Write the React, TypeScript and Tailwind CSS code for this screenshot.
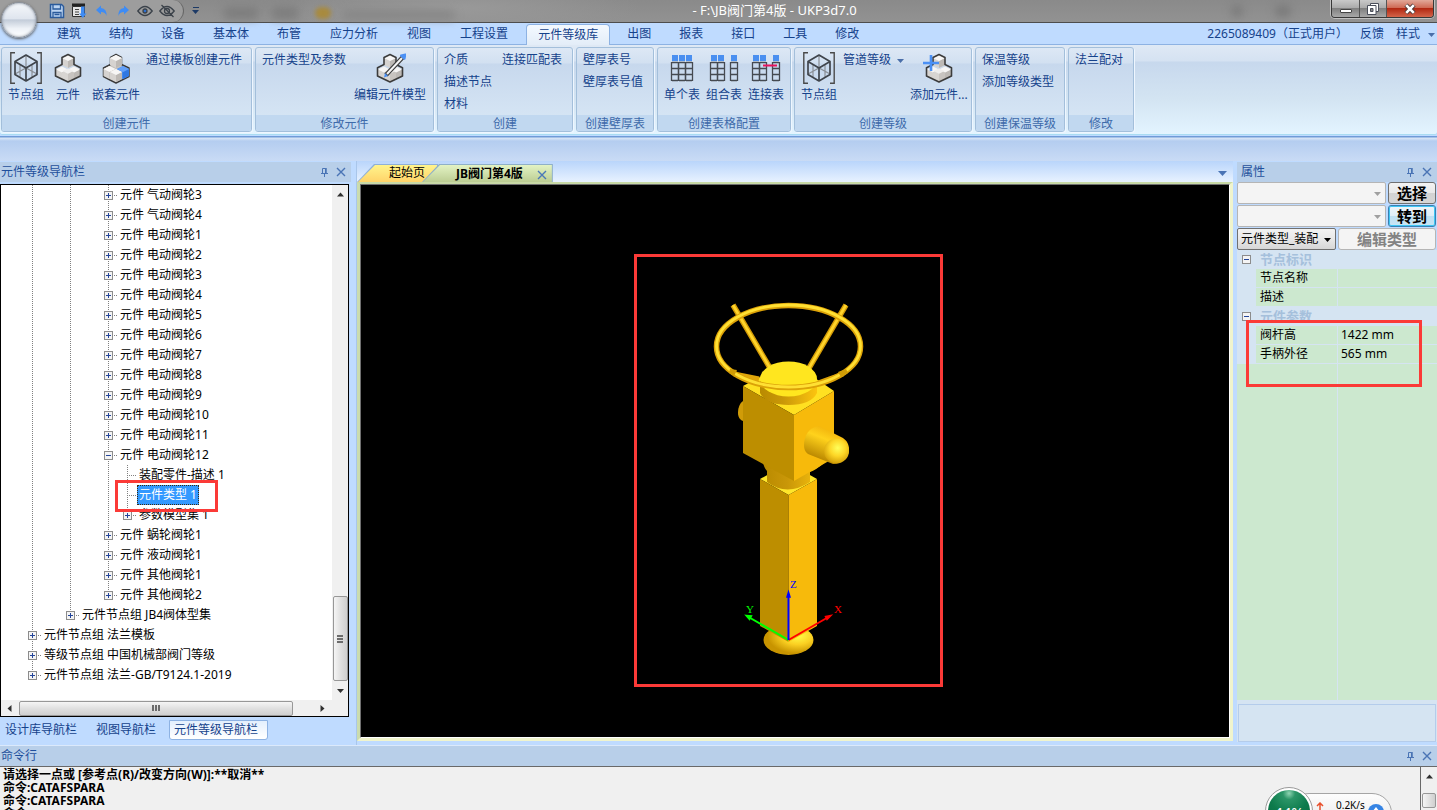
import type { ReactNode } from "react";

/* ---------- small glyphs ---------- */

function Triangle({ dir = "down", className = "" }: { dir?: "down" | "up" | "left" | "right"; className?: string }) {
  const d = {
    down: "M0 2h7L3.5 6z",
    up: "M0 5.500h7L3.500 1.500z",
    left: "M5.500 0v7L1.500 3.500z",
    right: "M1.500 0v7L5.500 3.500z",
  }[dir];
  return (
    <svg viewBox="0 0 7 7" className={`size-[7px] shrink-0 ${className}`} fill="currentColor" aria-hidden="true">
      <path d={d} />
    </svg>
  );
}

function PinIcon() {
  return (
    <svg viewBox="0 0 10 10" className="size-[10px]" fill="none" stroke="currentColor" aria-hidden="true">
      <path d="M2 6.500h7M3.500 6V1.500h3V6M5.500 7v3" />
      <path d="M7 1v5" strokeWidth="1.500" />
    </svg>
  );
}

function CloseIcon() {
  return (
    <svg viewBox="0 0 10 10" className="size-[10px]" fill="none" stroke="currentColor" strokeWidth="1.400" aria-hidden="true">
      <path d="M1 1l8 8M9 1L1 9" />
    </svg>
  );
}

/* ---------- ribbon icons ---------- */

function NodeGroupIcon() {
  return (
    <svg viewBox="0 0 32 32" className="size-8" fill="none" aria-hidden="true">
      <path d="M5 .8H.8v30.400H5M27 .8h4.200v30.400H27" stroke="#4a4a4a" strokeWidth="1.400" />
      <path d="M16 3v13M5 22l11-6 11 6M10 13v12M22 13v12" stroke="#8a8f96" strokeWidth="1.200" />
      <path d="M16 3l11 6.500v13L16 29 5 22.500v-13zM5 9.500L16 16l11-6.500M16 16v13" stroke="#40454c" strokeWidth="1.700" strokeLinejoin="round" />
    </svg>
  );
}

function Cube({ x, y, blue = false }: { x: number; y: number; blue?: boolean }) {
  return (
    <g transform={`translate(${x} ${y})`}>
      <path d="M0-6l6 3v7L0 7l-6-3v-7z" fill={blue ? "#3f87ee" : "#d6d3d0"} />
      <path d="M0 0l6-3v7L0 7z" fill={blue ? "#2f78e2" : "#bdb9b5"} />
      <path d="M0-6l6 3-6 3-6-3z" fill={blue ? "#63a0f8" : "#f7f6f5"} />
    </g>
  );
}

function CubeStack({ children }: { children?: ReactNode }) {
  return (
    <svg viewBox="0 0 32 32" className="size-8" fill="none" aria-hidden="true">
      <Cube x={10} y={20.5} />
      <Cube x={22} y={20.5} />
      <path d="M10 20.500l6-3 6 3v6.500l-6 3-6-3z" fill="#c8c4c0" />
      <path d="M16 17.500v12.500l-6-3v-6.500z" fill="#d8d5d2" />
      <path d="M16 16.500l5.500 2.500-5.500 2.800-5.500-2.800z" fill="#efeeed" />
      <Cube x={16} y={9} />
      <path d="M10 5.500L16 2.500l6 3v7l6.500 3.200v8.300L16 30 3.500 24v-8.300L10 12.500z" stroke="#3c3c3c" strokeWidth="1.600" strokeLinejoin="round" />
      {children}
    </svg>
  );
}

function NestedIcon() {
  return (
    <svg viewBox="0 0 32 32" className="size-8" fill="none" aria-hidden="true">
      <path d="M10.500 5.500L16 2.500l5.500 3v7l7.500 3.500v8.500l-7 3.500-6 3-6-3-6.500-3.500V16l7-3.500z" fill="#c4c0bc" stroke="#3c3c3c" strokeWidth="1.500" strokeLinejoin="round" />
      <Cube x={9.500} y={20} />
      <Cube x={23} y={20} blue />
      <Cube x={16} y={9} />
      <Cube x={16} y={23} />
    </svg>
  );
}

function EditIcon() {
  return (
    <CubeStack>
      <path d="M12 23L29 5" stroke="#3c3c3c" strokeWidth="4.500" />
      <path d="M13 22L28 6" stroke="#f5f5f5" strokeWidth="2" />
      <path d="M27 3.500l3.500 3.300 1-4.300z" fill="#4a90f5" stroke="#4a90f5" strokeWidth="2" strokeLinejoin="round" />
      <path d="M11 21l3 3-4 1.500z" fill="#4a90f5" />
    </CubeStack>
  );
}

function AddIcon() {
  return (
    <CubeStack>
      <path d="M8 3v16M0 11h16" stroke="#4a90f5" strokeWidth="2.600" />
    </CubeStack>
  );
}

function GridColumn({ x }: { x: number }) {
  return (
    <g>
      <rect x={x} y="3" width="6" height="6" fill="#4a8ff0" />
      <path d={`M${x} 10.500h6M${x} 16.500h6M${x} 22.500h6M${x} 28.500h6M${x - 0.5} 10v19M${x + 6.5} 10v19`} stroke="#454a51" strokeWidth="1.300" />
    </g>
  );
}

function TableIcon({ columns, linked = false }: { columns: number[]; linked?: boolean }) {
  return (
    <svg viewBox="0 0 32 32" className="size-8" fill="none" aria-hidden="true">
      {columns.map((x) => (
        <GridColumn key={x} x={x} />
      ))}
      {linked && <path d="M13 13.500h14" stroke="#e8125c" strokeWidth="2.200" />}
    </svg>
  );
}

/* ---------- ribbon ---------- */

function BigButton({ icon, label }: { icon: ReactNode; label: string }) {
  return (
    <button type="button" className="flex flex-col items-center gap-px pt-[3px] whitespace-nowrap">
      {icon}
      <span className="leading-5">{label}</span>
    </button>
  );
}

function TextButtons({ items }: { items: string[] }) {
  return (
    <div className="flex flex-col items-start">
      {items.map((t) => (
        <button type="button" key={t} className="h-[22px] leading-[22px] whitespace-nowrap">
          {t}
        </button>
      ))}
    </div>
  );
}

function Group({ title, width, gap = "gap-1.5", children }: { title: string; width: string; gap?: string; children: ReactNode }) {
  return (
    <section
      className={`${width} flex shrink-0 flex-col overflow-hidden rounded-[3px] border border-[#a3bfdb] bg-[linear-gradient(#dde8f5,#d2e0f1_15px,#c7d8ed_16px,#d9e8f6)] shadow-[1px_1px_0_#eef6ff]`}
    >
      <div className={`flex flex-1 items-start ${gap} pt-px pl-1.5`}>{children}</div>
      <h2 className="h-4 bg-[#c1d8f0] text-center leading-[18px] text-[#3e6aaa]">{title}</h2>
    </section>
  );
}

const tabs = ["建筑", "结构", "设备", "基本体", "布管", "应力分析", "视图", "工程设置", "元件等级库", "出图", "报表", "接口", "工具", "修改"];

function TitleBar() {
  return (
    <header className="relative z-10 flex h-[23px] shrink-0 items-center border-b border-[#4d4d4d] bg-[radial-gradient(ellipse_180px_26px_at_460px_8px,#999,transparent),linear-gradient(#8a8a8a,#929292)] text-white">
      <div className="flex h-full items-center rounded-r-full border-r border-[#666] bg-[#9d9d9d] pr-2 pl-[49px]">
        <div className="flex items-center gap-[6px] text-[#303942]">
          <button type="button" aria-label="保存" className="flex">
            <svg viewBox="0 0 16 16" className="size-4" fill="none" aria-hidden="true">
              <path d="M1.500 1.500h11l2 2v11h-13z" fill="#bcd4f2" stroke="#2b5b9c" strokeWidth="1.500" />
              <path d="M4 1.500v4.500h7.500V1.500M4 14.500V9.500h8v5M5.500 11.500h5" stroke="#2b5b9c" strokeWidth="1.300" />
            </svg>
          </button>
          <button type="button" aria-label="下载" className="flex">
            <svg viewBox="0 0 16 16" className="size-4" fill="none" aria-hidden="true">
              <path d="M1 2h13" stroke="#222" strokeWidth="3" />
              <path d="M1.500 3.500h12v10h-12z" fill="#e4e4e4" stroke="#303030" />
              <path d="M4 6.500h4M4 9h4M4 11.500h4" stroke="#444" />
              <path d="M10 3.500h3.500v7h2L11.800 15 8 10.500h2z" fill="#3f8cf4" />
            </svg>
          </button>
          <button type="button" aria-label="撤销" className="flex">
            <svg viewBox="0 0 16 16" className="size-4" aria-hidden="true">
              <path d="M3 7l5-4.500V5q6 .5 5.500 8Q12.500 9 8 9v2.500z" fill="#3f8cf4" />
            </svg>
          </button>
          <button type="button" aria-label="重做" className="flex">
            <svg viewBox="0 0 16 16" className="size-4" aria-hidden="true">
              <path d="M14 7L9 2.500V5q-6 .5-5.500 8Q4.500 9 9 9v2.500z" fill="#3f8cf4" />
            </svg>
          </button>
          <button type="button" aria-label="显示" className="flex">
            <svg viewBox="0 0 16 16" className="size-4" fill="none" stroke="#3b424a" strokeWidth="1.300" aria-hidden="true">
              <path d="M.8 8Q8-1 15.200 8 8 17 .8 8z" />
              <circle cx="8" cy="8" r="2" fill="#2c6fd0" />
            </svg>
          </button>
          <button type="button" aria-label="隐藏" className="flex">
            <svg viewBox="0 0 16 16" className="size-4" fill="none" stroke="#3b424a" strokeWidth="1.300" aria-hidden="true">
              <path d="M.8 8Q8-1 15.200 8 8 17 .8 8zM2.500 2l12 12" />
              <circle cx="8" cy="8" r="2.500" />
            </svg>
          </button>
        </div>
      </div>
      <button type="button" aria-label="自定义快速访问" className="ml-2 flex flex-col items-center text-[#1d3a66]">
        <span className="h-px w-[6px] bg-current" />
        <Triangle />
      </button>
      <i className="mt-1 ml-6 h-3 w-9 rounded-full bg-[#7d7d7d] blur-[4px]" />
      <i className="mt-1 ml-3 h-3 w-7 rounded-full bg-[#7d7d7d] blur-[4px]" />
      <i className="mt-1 ml-4 h-3 w-4 rounded-full bg-[#a88a3e] blur-[2px]" />
      <i className="mt-2 ml-3 h-2 w-28 rounded-full bg-[#858585] blur-[4px]" />
      <h1 className="absolute inset-x-0 top-0 ml-28 text-center text-[13px] leading-[21px]">- F:\JB阀门第4版 - UKP3d7.0</h1>
      <i className="mr-8 ml-auto h-3 w-3 rounded-full bg-[#7a7a7a] blur-[4px]" />
      <i className="mr-10 h-3 w-4 rounded-full bg-[#7a7a7a] blur-[4px]" />
      <div className="relative mr-[3px] flex h-[18px] self-start overflow-hidden rounded-b-[4px] border border-t-0 border-[#383838] shadow-[0_0_0_1px_#c0c0c0]">
        <button type="button" aria-label="最小化" className="flex w-7 items-center justify-center border-r border-[#555] bg-[linear-gradient(#c9c9c9,#ababab_45%,#808080_50%,#a8a8a8)]">
          <span className="mt-1 h-1 w-3 rounded-[1px] border border-[#444] bg-white" />
        </button>
        <button type="button" aria-label="还原" className="flex w-[27px] items-center justify-center border-r border-[#555] bg-[linear-gradient(#c9c9c9,#ababab_45%,#808080_50%,#a8a8a8)]">
          <svg viewBox="0 0 12 12" className="size-3" fill="#fff" stroke="#4a4e5a" aria-hidden="true">
            <path d="M3.500.5h8v8h-8z" />
            <path d="M.5 2.500h8.500v9H.5z" />
            <path d="M3.500 5.500h2.500v3H3.500z" fill="#888" />
          </svg>
        </button>
        <button type="button" aria-label="关闭" className="flex w-[46px] items-center justify-center bg-[linear-gradient(#e2a899,#cf6a55_45%,#b22812_50%,#d4644a)]">
          <svg viewBox="0 0 12 12" className="size-3" fill="none" aria-hidden="true">
            <path d="M2 2l8 8M10 2l-8 8" stroke="#4b3a3a" strokeWidth="4.500" />
            <path d="M2.200 2.200l7.600 7.600M9.800 2.200L2.200 9.800" stroke="#fff" strokeWidth="2.600" />
          </svg>
        </button>
      </div>
      <button
        type="button"
        aria-label="应用程序菜单"
        className="absolute top-0.5 left-px size-9 rounded-full border border-[#8b929c] bg-[linear-gradient(#f6f8fb_0,#dfe5ee_46%,#c3ccd9_50%,#eef2f7_75%,#fff)] shadow-[0_1px_3px_#555,inset_0_0_3px_#7d8796]"
      />
    </header>
  );
}

function RibbonTabs() {
  return (
    <nav className="flex h-[22px] shrink-0 items-end border-b border-[#8db2e3] bg-[#bfdbff] pl-[43px]">
      {tabs.map((t) =>
        t === "元件等级库" ? (
          <button
            type="button"
            key={t}
            className="mx-[3px] -mb-px h-[21px] rounded-t-[4px] border border-b-0 border-[#8db2e3] bg-[linear-gradient(#f4f9ff,#e3edf8)] px-[11px] leading-5"
          >
            {t}
          </button>
        ) : (
          <button type="button" key={t} className={`h-[21px] pt-px leading-5 ${t.length > 3 ? "px-[15px]" : "px-[14px]"}`}>
            {t}
          </button>
        ),
      )}
      <div className="ml-auto flex items-center gap-3 pr-0.5 leading-5">
        <span>2265089409（正式用户）</span>
        <button type="button">反馈</button>
        <button type="button" className="flex items-center gap-2">
          样式
          <Triangle className="text-[#4a6ea9]" />
        </button>
      </div>
    </nav>
  );
}

function Ribbon() {
  return (
    <div className="flex h-[90px] shrink-0 gap-[3px] overflow-hidden rounded-b-[3px] border-b border-[#a9dcf2] bg-[linear-gradient(#dfe9f5,#d5e2f2_16px,#c7d8ed_17px,#d3e4f2_60%,#e3f4ff)] pt-0.5 pb-0.5 pl-px">
      <Group title="创建元件" width="w-[251px]">
        <div className="flex gap-2">
          <BigButton icon={<NodeGroupIcon />} label="节点组" />
          <BigButton icon={<CubeStack />} label="元件" />
          <BigButton icon={<NestedIcon />} label="嵌套元件" />
        </div>
        <TextButtons items={["通过模板创建元件"]} />
      </Group>
      <Group title="修改元件" width="w-[179px]" gap="gap-2">
        <TextButtons items={["元件类型及参数"]} />
        <BigButton icon={<EditIcon />} label="编辑元件模型" />
      </Group>
      <Group title="创建" width="w-[136px]" gap="gap-2.5">
        <TextButtons items={["介质", "描述节点", "材料"]} />
        <TextButtons items={["连接匹配表"]} />
      </Group>
      <Group title="创建壁厚表" width="w-[78px]">
        <TextButtons items={["壁厚表号", "壁厚表号值"]} />
      </Group>
      <Group title="创建表格配置" width="w-[134px]">
        <BigButton icon={<TableIcon columns={[6, 13, 20]} />} label="单个表" />
        <BigButton icon={<TableIcon columns={[3, 10, 23]} />} label="组合表" />
        <BigButton icon={<TableIcon columns={[3, 10, 23]} linked />} label="连接表" />
      </Group>
      <Group title="创建等级" width="w-[178px]">
        <BigButton icon={<NodeGroupIcon />} label="节点组" />
        <button type="button" className="flex h-[22px] items-center gap-1.5 whitespace-nowrap">
          管道等级
          <Triangle className="text-[#4a6ea9]" />
        </button>
        <BigButton icon={<AddIcon />} label="添加元件..." />
      </Group>
      <Group title="创建保温等级" width="w-[90px]">
        <TextButtons items={["保温等级", "添加等级类型"]} />
      </Group>
      <Group title="修改" width="w-[66px]">
        <TextButtons items={["法兰配对"]} />
      </Group>
    </div>
  );
}

/* ---------- docked panels ---------- */

function PanelHeader({ title, pad = "pl-px" }: { title: string; pad?: string }) {
  return (
    <div className={`flex h-5 shrink-0 items-center gap-[7px] bg-[#b8cfe9] pr-[5px] text-[#1f4f9c] ${pad}`}>
      <h2 className="flex-1 leading-5">{title}</h2>
      <button type="button" aria-label="固定" className="text-[#4a74b5]">
        <PinIcon />
      </button>
      <button type="button" aria-label="关闭" className="text-[#4a74b5]">
        <CloseIcon />
      </button>
    </div>
  );
}

type Node = { label: string; level: number; state?: "open" | "closed"; last?: boolean; selected?: boolean };

const motors = Array.from({ length: 11 }, (_, i): Node => ({ label: `元件 电动阀轮${i + 1}`, level: 4, state: "closed" }));

const nodes: Node[] = [
  { label: "元件 气动阀轮3", level: 4, state: "closed" },
  { label: "元件 气动阀轮4", level: 4, state: "closed" },
  ...motors,
  { label: "元件 电动阀轮12", level: 4, state: "open" },
  { label: "装配零件-描述 1", level: 5 },
  { label: "元件类型 1", level: 5, selected: true },
  { label: "参数模型集 1", level: 5, state: "closed", last: true },
  { label: "元件 蜗轮阀轮1", level: 4, state: "closed" },
  { label: "元件 液动阀轮1", level: 4, state: "closed" },
  { label: "元件 其他阀轮1", level: 4, state: "closed" },
  { label: "元件 其他阀轮2", level: 4, state: "closed", last: true },
  { label: "元件节点组 JB4阀体型集", level: 2, state: "closed", last: true },
  { label: "元件节点组 法兰模板", level: 0, state: "closed" },
  { label: "等级节点组 中国机械部阀门等级", level: 0, state: "closed" },
  { label: "元件节点组 法兰-GB/T9124.1-2019", level: 0, state: "closed", last: true },
];

const dots = "bg-[linear-gradient(#808080_50%,transparent_50%)] bg-[length:1px_2px]";
const dotsAcross = "bg-[linear-gradient(90deg,#808080_50%,transparent_50%)] bg-[length:2px_1px]";

function Toggle({ open }: { open: boolean }) {
  return (
    <svg viewBox="0 0 9 9" className="size-[9px]" aria-hidden="true">
      <rect x=".5" y=".5" width="8" height="8" fill="#f4f4f4" stroke="#8c8c8c" />
      <path d={open ? "M2 4.500h5" : "M2 4.500h5M4.500 2v5"} stroke="#23459a" />
    </svg>
  );
}

function TreeRow({ node }: { node: Node }) {
  return (
    <li className="relative flex h-5 items-center">
      {Array.from({ length: node.level }, (_, i) => (
        <span key={i} className="flex h-5 w-[19px] shrink-0 justify-center">
          {i % 2 === 0 && <span className={`w-px ${dots}`} />}
        </span>
      ))}
      <span className="grid h-5 w-[19px] shrink-0">
        <span className={`col-start-1 row-start-1 ml-[9px] w-px ${dots} ${node.last ? "h-2.5" : "h-5"}`} />
        <span className={`col-start-1 row-start-1 ml-[9px] h-px self-center ${dotsAcross}`} />
        {node.state && (
          <button type="button" aria-label={node.state === "open" ? "折叠" : "展开"} className="col-start-1 row-start-1 self-center justify-self-center">
            <Toggle open={node.state === "open"} />
          </button>
        )}
      </span>
      {node.selected ? (
        <button type="button" className="h-5 border border-dotted border-[#3a2a10] bg-[#3399ff] px-px leading-[18px] text-white">
          {node.label}
        </button>
      ) : (
        <button type="button" className="pl-0.5 leading-5">
          {node.label}
        </button>
      )}
      {node.selected && <span className="pointer-events-none absolute -top-[5px] left-[92px] z-10 h-8 w-[103px] border-3 border-[#fb3a37]" />}
    </li>
  );
}

function Navigator() {
  return (
    <aside className="flex w-[351px] shrink-0 flex-col pt-px">
      <PanelHeader title="元件等级导航栏" />
      <div className="mt-0.5 mr-0.5 flex min-h-0 flex-1 flex-col border border-black bg-white">
        <div className="flex min-h-0 flex-1">
          <ul className="min-w-0 flex-1 overflow-hidden pl-[22px] whitespace-nowrap text-black">
            {nodes.map((n) => (
              <TreeRow key={n.label} node={n} />
            ))}
          </ul>
          <div className="flex w-4 flex-col items-center bg-[#f0f0f0] py-1.5 text-[#303030]">
            <Triangle dir="up" />
            <div className="min-h-0 flex-1" />
            <div className="flex h-[85px] w-[15px] flex-col items-center justify-center gap-px rounded-[2px] border border-[#979797] bg-[linear-gradient(90deg,#f5f5f5,#e0e0e0_50%,#cfcfcf)]">
              <span className="h-0.5 w-1.5 bg-[#6c6c6c]" />
              <span className="h-0.5 w-1.5 bg-[#6c6c6c]" />
              <span className="h-0.5 w-1.5 bg-[#6c6c6c]" />
            </div>
            <Triangle className="mt-1.5" />
          </div>
        </div>
        <div className="flex h-4 items-center bg-[#f0f0f0] pr-[22px] pl-[5px] text-[#303030]">
          <Triangle dir="left" />
          <div className="ml-[6px] flex h-[15px] w-[274px] items-center justify-center gap-px rounded-[2px] border border-[#979797] bg-[linear-gradient(#f5f5f5,#e0e0e0_50%,#cfcfcf)]">
            <span className="h-1.5 w-0.5 bg-[#6c6c6c]" />
            <span className="h-1.5 w-0.5 bg-[#6c6c6c]" />
            <span className="h-1.5 w-0.5 bg-[#6c6c6c]" />
          </div>
          <Triangle dir="right" className="ml-auto" />
        </div>
      </div>
      <nav className="flex h-7 items-start pt-[3px] pl-[5px]">
        <button type="button" className="h-5 leading-5">设计库导航栏</button>
        <button type="button" className="ml-[19px] h-5 leading-5">视图导航栏</button>
        <button type="button" className="ml-[13px] h-5 rounded-b-[3px] border border-[#8db2e3] bg-[linear-gradient(#e3effd,#fff)] pr-[9px] pl-1 leading-[18px]">
          元件等级导航栏
        </button>
      </nav>
    </aside>
  );
}

/* ---------- 3D viewport ---------- */

function ValveModel() {
  return (
    <svg viewBox="634 254 309 433" className="h-[433px] w-[309px] shrink-0" role="img" aria-label="阀门模型">
      <defs>
        <linearGradient id="drum" x1="0" x2="1">
          <stop offset="0" stopColor="#b98a00" />
          <stop offset=".4" stopColor="#c99708" />
          <stop offset="1" stopColor="#fcc40f" />
        </linearGradient>
        <radialGradient id="base" cx=".68" cy=".35" r=".6">
          <stop offset="0" stopColor="#ffff4a" />
          <stop offset=".5" stopColor="#fbd022" />
          <stop offset="1" stopColor="#c89400" />
        </radialGradient>
        <radialGradient id="ball" cx=".55" cy=".38" r=".65">
          <stop offset="0" stopColor="#ffff5a" />
          <stop offset=".5" stopColor="#fdd626" />
          <stop offset="1" stopColor="#cf9a06" />
        </radialGradient>
        <linearGradient id="arm" gradientUnits="userSpaceOnUse" x1="828" y1="428" x2="816" y2="458">
          <stop offset="0" stopColor="#f2b40c" />
          <stop offset=".35" stopColor="#ffd21c" />
          <stop offset="1" stopColor="#b98700" />
        </linearGradient>
      </defs>

      <ellipse cx="788.500" cy="640" rx="25" ry="15" fill="url(#base)" />
      <path d="M760 479l28.500-16 28.500 16-28.500 16z" fill="#ffe62a" />
      <path d="M760 479l28.500 16v147L760 626z" fill="#bd8e00" />
      <path d="M817 479l-28.500 16v147L817 626z" fill="#f7ba0b" />
      <path d="M763 462q1 6 4 9v11q20 15 43 0v-10q6-2 14-9l-30-15z" fill="url(#drum)" />

      <path d="M743 401c-4 3-5 8-5 12s2 7 5 8z" fill="#d09c08" />
      <path d="M743 386l19-10h50l22 15-40 24z" fill="#ffe021" />
      <path d="M743 386l51 29v66l-51-28z" fill="#bd8e00" />
      <path d="M834 391l-40 24v66l40-23z" fill="#f7ba0b" />
      <path d="M760 381v12q6 12 28.500 12t28.500-12v-12z" fill="url(#drum)" />

      <g fill="none">
        <path d="M733 305l37 63M846 305l-37 63" stroke="#d39b06" strokeWidth="5.500" />
        <path d="M733 305l37 63M846 305l-37 63" stroke="#ffd42a" strokeWidth="2.800" />
      </g>
      <ellipse cx="788.500" cy="379" rx="28.500" ry="17.500" fill="#ffe61f" />
      <path d="M734 374l25 5M843 374l-25 9" stroke="#e0a60a" strokeWidth="5" />
      <g fill="none">
        <ellipse cx="788.500" cy="346.500" rx="72" ry="41" stroke="#dca208" strokeWidth="5.500" />
        <ellipse cx="788.500" cy="346" rx="72" ry="41" stroke="#ffe033" strokeWidth="2.800" />
      </g>
      <path d="M730 369l7 1-3 6-5-3zM838 372l8-3 2 4-7 4z" fill="#d09c06" />

      <path d="M819 426c-10 1-15 10-15 19 0 4 1 7 4 9l25 10c8 0 16-6 16-14s-4-11-8-13z" fill="url(#arm)" />
      <circle cx="836.500" cy="451" r="12.500" fill="url(#ball)" />

      <g fill="none" strokeWidth="2">
        <path d="M788.500 640l40-23" stroke="#f00" />
        <path d="M788.500 640l-40-23" stroke="#0f0" />
        <path d="M788.500 640v-46" stroke="#00f" />
      </g>
      <path d="M831 615.500l-4 4-1.500-3z" fill="#f00" stroke="#f00" strokeWidth="1.500" />
      <path d="M746 615.500l5.500.5-2 3.500z" fill="#0f0" stroke="#0f0" strokeWidth="1.500" />
      <path d="M788.500 592l1.500 5h-3z" fill="#00f" stroke="#00f" strokeWidth="1.500" />
      <g fontFamily="Liberation Serif, serif" fontSize="11">
        <text x="834" y="613" fill="#f00">X</text>
        <text x="746" y="613" fill="#0f0">Y</text>
        <text x="790" y="588" fill="#00f">Z</text>
      </g>
      <rect x="635.500" y="255.500" width="306" height="430" fill="none" stroke="#fb3a37" strokeWidth="3" />
    </svg>
  );
}

function Viewport() {
  return (
    <main className="flex min-w-0 flex-1 flex-col border-l border-[#a9c6ea]">
      <div className="flex h-[21px] shrink-0 items-end bg-[linear-gradient(#b9d5fb,#e8f2ff)] pr-1.5">
        <button type="button" className="-mr-4 h-[18px] bg-[#8fb0d8] p-px pb-0 [clip-path:polygon(17px_0,100%_0,100%_100%,0_100%)]">
          <span className="block h-full bg-[linear-gradient(#fff48c,#ffd369)] pr-3 pl-[31px] leading-4 text-black [clip-path:polygon(17px_0,100%_0,100%_100%,0_100%)]">
            起始页
          </span>
        </button>
        <div className="h-[18px] bg-[#8fb0c8] p-px pb-0 [clip-path:polygon(17px_0,100%_0,100%_100%,0_100%)]">
          <div className="flex h-full items-center gap-3.5 bg-[linear-gradient(#e3f3c4,#bccd93)] pr-[5px] pl-[33px] leading-4 font-bold text-black [clip-path:polygon(17px_0,100%_0,100%_100%,0_100%)]">
            <button type="button">JB阀门第4版</button>
            <button type="button" aria-label="关闭" className="pt-0.5 text-[#4a78b8]">
              <CloseIcon />
            </button>
          </div>
        </div>
        <button type="button" aria-label="窗口列表" className="mb-1.5 ml-auto text-[#4a74b5]">
          <svg viewBox="0 0 9 5" className="h-[5px] w-[9px]" fill="currentColor" aria-hidden="true">
            <path d="M0 0h9L4.500 5z" />
          </svg>
        </button>
      </div>
      <div className="mb-1 flex min-h-0 flex-1 border-x-3 border-t-2 border-b-3 border-[#c8d9a6] border-r-[#f0f4cd] border-b-[#f0f4cd] border-l-[#cbdcae]">
        <div className="flex flex-1 items-center justify-center overflow-hidden border border-[#707070] border-r-white border-b-white bg-black pt-[19px] pr-[13px]">
          <ValveModel />
        </div>
      </div>
    </main>
  );
}

/* ---------- properties ---------- */

function Combo({ label, value, disabled = false, className }: { label: string; value: string; disabled?: boolean; className: string }) {
  return (
    <div className={`relative h-[22px] ${className}`}>
      <select
        aria-label={label}
        disabled={disabled}
        className={`h-full w-full appearance-none rounded-[2px] border pr-4 pl-[3px] text-black ${disabled ? "border-[#b5b5b5] bg-[#f4f4f4]" : "border-[#707070] bg-[linear-gradient(#f3f3f3,#e8e8e8_50%,#d6d6d6)]"}`}
      >
        <option>{value}</option>
      </select>
      <Triangle className={`pointer-events-none absolute top-2 right-[5px] ${disabled ? "text-[#a0a0a0]" : "text-black"}`} />
    </div>
  );
}

function Section({ title }: { title: string }) {
  return (
    <tr className="h-[19px]">
      <td className="p-0">
        <button type="button" aria-label="折叠" className="ml-[5px] flex">
          <Toggle open />
        </button>
      </td>
      <th colSpan={2} className="p-0 pl-1 text-left text-[13px] leading-[19px] font-bold text-[#a5c0dc]">
        {title}
      </th>
    </tr>
  );
}

function Property({ name, value = "" }: { name: string; value?: string }) {
  return (
    <tr className="h-[19px]">
      <td className="p-0" />
      <th className="border-b border-[#d5e4f2] bg-[#cce8cf] p-0 pl-1 text-left leading-[18px] font-normal">{name}</th>
      <td className="border-b border-l border-[#d5e4f2] bg-[#cce8cf] p-0 pl-[3px] leading-[18px]">{value}</td>
    </tr>
  );
}

const wideButton = "w-12 rounded-[3px] border text-[15px] leading-5 font-bold";

function Properties() {
  return (
    <aside className="ml-1 flex w-[200px] shrink-0 flex-col pt-px">
      <PanelHeader title="属性" pad="pl-1" />
      <div className="flex flex-col gap-px pr-px text-black">
        <div className="flex gap-0.5">
          <Combo label="节点" value="" disabled className="flex-1" />
          <button type="button" className={`${wideButton} border-[#707070] bg-[linear-gradient(#f3f3f3,#e8e8e8_50%,#d2d2d2_51%,#d6d6d6)]`}>
            选择
          </button>
        </div>
        <div className="flex gap-0.5">
          <Combo label="引用" value="" disabled className="flex-1" />
          <button
            type="button"
            className={`${wideButton} border-[#3c7fb1] bg-[linear-gradient(#eef5fa,#dfeef8_50%,#bfe0f3_51%,#c8e6f5)] shadow-[inset_0_0_0_1px_#3fc7f5]`}
          >
            转到
          </button>
        </div>
        <div className="flex gap-0.5">
          <Combo label="类型" value="元件类型_装配" className="w-[99px]" />
          <button type="button" disabled className="flex-1 rounded-[3px] border border-[#b5b5b5] bg-[#f4f4f4] text-[15px] leading-5 font-bold text-[#838383]">
            编辑类型
          </button>
        </div>
      </div>
      <div className="relative flex min-h-0 flex-1 flex-col bg-[#d5e4f2]">
        <table className="w-full table-fixed border-separate border-spacing-0 text-black">
          <colgroup>
            <col className="w-[19px]" />
            <col className="w-[81px]" />
            <col />
          </colgroup>
          <tbody>
            <Section title="节点标识" />
            <Property name="节点名称" />
            <Property name="描述" />
            <Section title="元件参数" />
            <Property name="阀杆高" value="1422 mm" />
            <Property name="手柄外径" value="565 mm" />
          </tbody>
        </table>
        <div className="flex flex-1 bg-[#cce8cf]">
          <span className="w-[101px] border-r border-[#d5e4f2]" />
        </div>
        <span className="pointer-events-none absolute top-[70px] left-[9px] h-[67px] w-[176px] border-3 border-[#fb3a37]" />
      </div>
      <div className="bg-[#d5e4f2] px-px pt-1">
        <div className="h-[38px] border border-[#b4cceb]" />
      </div>
      <div className="h-[3px]" />
    </aside>
  );
}

/* ---------- command line ---------- */

function SpeedWidget() {
  return (
    <div className="absolute -bottom-[25px] left-[1265px] h-12 w-[127px] text-black">
      <div className="absolute top-1.5 right-0 left-6 h-10 rounded-full border border-[#a5a5a5] bg-[linear-gradient(#fdfdfd,#e4e4e4)]" />
      <div className="absolute size-12 rounded-full border border-[#9a9a9a] bg-white p-0.5">
        <div className="flex size-full justify-center rounded-full bg-[radial-gradient(circle_at_50%_8%,#8fd4b2,#2b9567_14%,#0d7b4c_45%,#06633b)] pt-3 text-[15px] leading-5 text-white">44%</div>
      </div>
      <svg viewBox="0 0 8 8" className="absolute top-[15px] left-[51px] size-2" fill="none" stroke="#e8502c" strokeWidth="1.500" aria-hidden="true">
        <path d="M4 8V1.500M1 4l3-3 3 3" />
      </svg>
      <span className="absolute top-3 left-[71px] text-[10px] leading-3">0.2K/s</span>
      <span className="absolute top-[17px] left-[103px] size-4 rounded-full bg-[#3584e4]">
        <svg viewBox="0 0 16 16" fill="#fff" aria-hidden="true">
          <path d="M8 3l4 5H9v5H7V8H4z" />
        </svg>
      </span>
    </div>
  );
}

function CommandLine() {
  return (
    <footer className="relative flex h-[65px] shrink-0 flex-col overflow-hidden border-t border-[#dbe9fb]">
      <PanelHeader title="命令行" />
      <div className="flex min-h-0 flex-1 border-t border-[#696969] bg-[#f0f0f0]">
        <div className="min-w-0 flex-1 border-r border-[#696969] pt-px pl-[3px] leading-[13px] font-bold text-black">
          <p>请选择一点或 [参考点(R)/改变方向(W)]:**取消**</p>
          <p>命令:CATAFSPARA</p>
          <p>命令:CATAFSPARA</p>
          <p>命令:</p>
        </div>
        <div className="flex w-4 flex-col items-center pt-1.5 text-[#303030]">
          <Triangle dir="up" />
          <div className="mt-[13px] h-[15px] w-[14px] shrink-0 rounded-[2px] border border-[#979797] bg-[linear-gradient(90deg,#f5f5f5,#cfcfcf)]" />
        </div>
      </div>
      <SpeedWidget />
    </footer>
  );
}

export default function App() {
  return (
    <div className="flex h-screen min-h-[600px] flex-col overflow-hidden bg-[#bfdbff] font-['Noto_Sans','Noto_Sans_CJK_SC',sans-serif] text-[12px] leading-5 text-[#15428b]">
      <TitleBar />
      <RibbonTabs />
      <Ribbon />
      <div className="h-[26px] shrink-0 border-t border-[#bfdbff] bg-[linear-gradient(#6f9bd8_1px,#dbe7f7_2px,#b4cdf0_5px,#c9dbf5)]" />
      <div className="flex min-h-0 flex-1">
        <Navigator />
        <div className="w-[5px]" />
        <Viewport />
        <Properties />
      </div>
      <CommandLine />
    </div>
  );
}
